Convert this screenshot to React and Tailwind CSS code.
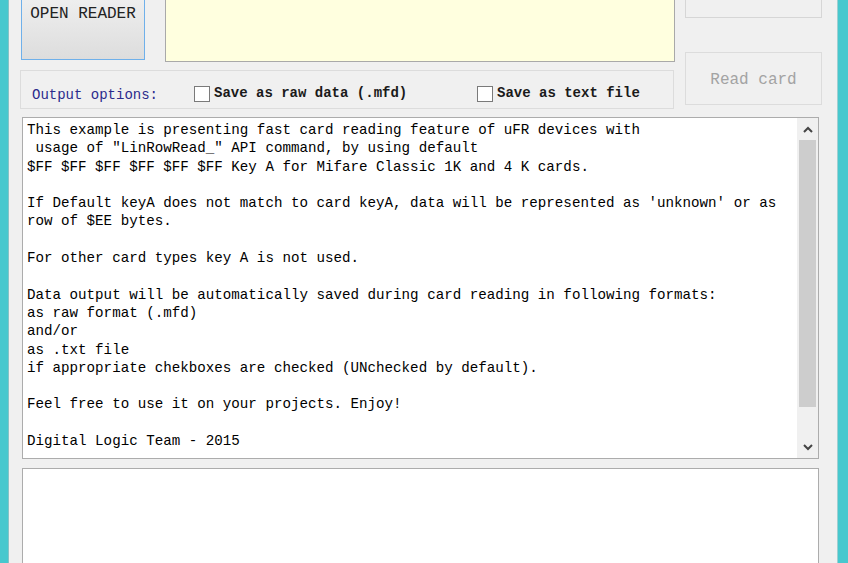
import React from "react";

const lines = [
  "This example is presenting fast card reading feature of uFR devices with",
  " usage of \"LinRowRead_\" API command, by using default",
  "$FF $FF $FF $FF $FF $FF Key A for Mifare Classic 1K and 4 K cards.",
  "",
  "If Default keyA does not match to card keyA, data will be represented as 'unknown' or as",
  "row of $EE bytes.",
  "",
  "For other card types key A is not used.",
  "",
  "Data output will be automatically saved during card reading in following formats:",
  "as raw format (.mfd)",
  "and/or",
  "as .txt file",
  "if appropriate chekboxes are checked (UNchecked by default).",
  "",
  "Feel free to use it on your projects. Enjoy!",
  "",
  "Digital Logic Team - 2015",
];

const mono = { fontFamily: '"Liberation Mono", "Courier New", monospace' };

function Checkbox({ label }) {
  return (
    <div className="flex items-center gap-[4px]">
      <div className="h-[16px] w-[16px] border border-[#7a7a7a] bg-white" />
      <span className="text-[14px] font-bold text-[#1a1a1a]">{label}</span>
    </div>
  );
}

function Chevron({ up }) {
  return (
    <svg width="10" height="7" viewBox="0 0 10 7">
      <path
        d={up ? "M1 6 L5 2 L9 6" : "M1 1 L5 5 L9 1"}
        fill="none"
        stroke="#444"
        strokeWidth="2"
      />
    </svg>
  );
}

export default function App() {
  return (
    <div className="flex h-[563px] w-[848px] overflow-hidden" style={mono}>
      <div className="w-[9px] border-r border-[#86c3c6] bg-[#47c8ce]" />

      <div className="flex flex-1 flex-col bg-[#f0f0f0]">
        {/* top controls */}
        <div className="flex h-[110px]">
          <div className="ml-[11px] flex w-[655px] flex-col">
            <div className="flex h-[62px]">
              <button className="ml-[1px] flex h-[60px] w-[124px] items-start justify-center border border-t-0 border-[#6fb0ea] bg-gradient-to-b from-[#eeeeee] to-[#dddddd] pt-[2px] text-[16px] text-[#222]">
                OPEN READER
              </button>
              <div className="ml-[20px] h-[62px] w-[510px] border border-t-0 border-[#a9a9a9] bg-[#ffffdf]" />
            </div>
            <div className="mt-[8px] flex h-[39px] w-[654px] items-center border border-[#dcdcdc] pt-[8px] pl-[11px]">
              <span className="w-[162px] pt-[4px] text-[14px] text-[#2b2b8c]">
                Output options:
              </span>
              <div className="w-[283px]">
                <Checkbox label="Save as raw data (.mfd)" />
              </div>
              <Checkbox label="Save as text file" />
            </div>
          </div>

          <div className="ml-[10px] flex w-[137px] flex-col">
            <div className="h-[18px] border border-t-0 border-[#d6d6d6] bg-[#f0f0f0]" />
            <button className="mt-[34px] h-[53px] border border-[#dcdcdc] bg-[#f0f0f0] pt-[2px] text-[16px] text-[#a3a3a3]">
              Read card
            </button>
          </div>
        </div>

        {/* info text box */}
        <div className="ml-[13px] mt-[7px] flex h-[342px] w-[797px] border border-[#acacac] bg-white">
          <div className="flex-1 overflow-hidden pl-[4px] pt-[3px] text-[14.2px] leading-[18.3px] text-black whitespace-pre">
            {lines.map((l, i) => (
              <div key={i} className="h-[18.3px]">
                {l}
              </div>
            ))}
          </div>
          <div className="flex w-[21px] flex-col items-center bg-[#f0f0f0]">
            <div className="flex h-[22px] items-center justify-center">
              <Chevron up />
            </div>
            <div className="h-[267px] w-[17px] bg-[#cdcdcd]" />
            <div className="flex flex-1 items-end justify-center">
              <div className="flex h-[22px] items-center justify-center">
                <Chevron />
              </div>
            </div>
          </div>
        </div>

        {/* output box */}
        <div className="ml-[13px] mt-[9px] w-[797px] flex-1 border border-b-0 border-[#acacac] bg-white" />
      </div>

      <div className="w-[11px] border-l border-[#9fcfd1] bg-[#47c8ce]" />
    </div>
  );
}
